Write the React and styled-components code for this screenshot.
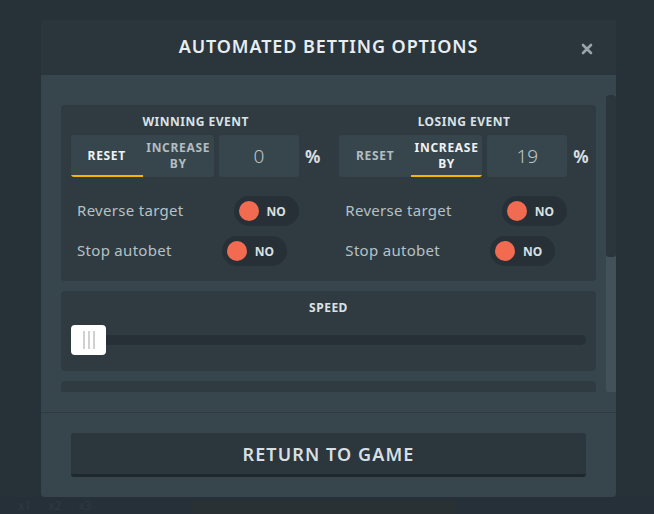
import React from 'react';
import styled, { createGlobalStyle } from 'styled-components';

const GlobalStyle = createGlobalStyle`
  html, body {
    margin: 0;
    padding: 0;
    background: #273238;
  }
  body {
    font-family: "Noto Sans", "Open Sans", sans-serif;
  }
  * {
    box-sizing: border-box;
  }
`;

const Backdrop = styled.div`
  width: 654px;
  height: 514px;
  overflow: hidden;
  padding-top: 20px;
  background: #273238;
`;

const Modal = styled.div`
  position: relative;
  width: 575px;
  margin-left: 41px;
  display: flex;
  flex-direction: column;
  background: #37454c;
  border-radius: 0 0 4px 4px;
`;

const Header = styled.header`
  height: 55px;
  display: flex;
  align-items: center;
  justify-content: center;
  background: #2a353c;
`;

const Title = styled.h1`
  margin: 0 0 4px;
  font-size: 18px;
  font-weight: 600;
  letter-spacing: 0.9px;
  color: #e8edef;
`;

const CloseButton = styled.button`
  position: absolute;
  top: 23px;
  right: 23px;
  width: 12px;
  height: 12px;
  padding: 0;
  border: 0;
  background: none;
  cursor: pointer;
  display: flex;
`;

const Body = styled.div`
  display: flex;
  height: 337px;
  padding: 20px 0;
`;

const ScrollArea = styled.div`
  flex: 1;
  overflow: hidden;
  padding: 10px 10px 10px 20px;
  display: flex;
  flex-direction: column;
  gap: 10px;
`;

const ScrollTrack = styled.div`
  width: 10px;
  background: #435158;
  border-radius: 2px 0 0 2px;
`;

const ScrollThumb = styled.div`
  height: 162px;
  background: #2b363c;
  border-radius: 3px;
`;

const Card = styled.section`
  flex-shrink: 0;
  background: #2f3b41;
  border-radius: 4px;
  padding: 9px 10px ${props => props.padBottom || 15}px;
  min-height: ${props => props.minHeight || 0}px;
`;

const EventsGrid = styled.div`
  display: grid;
  grid-template-columns: 1fr 1fr;
  column-gap: 19px;
`;

const Column = styled.div`
  display: flex;
  flex-direction: column;
`;

const Heading = styled.h2`
  margin: 0 0 ${props => props.gap || 5}px;
  font-size: 12px;
  line-height: 16px;
  font-weight: 700;
  letter-spacing: 0.5px;
  text-align: center;
  color: #dbe2e5;
`;

const Controls = styled.div`
  display: flex;
  align-items: center;
  gap: 5px;
`;

const TabGroup = styled.div`
  display: flex;
  width: 143px;
  height: 42px;
  background: #37454c;
  border-radius: 3px;
  overflow: hidden;
`;

const Tab = styled.button`
  flex: 1;
  padding: 2px 0 0;
  border: 0;
  border-bottom: 2px solid ${props => (props.active ? '#f7b500' : 'transparent')};
  background: none;
  font-family: inherit;
  font-size: 12px;
  line-height: 16px;
  font-weight: 700;
  letter-spacing: 0.7px;
  color: ${props => (props.active ? '#eef2f4' : '#b2bdc2')};
  cursor: pointer;
`;

const ValueBox = styled.input`
  width: 80px;
  height: 42px;
  border: 0;
  border-radius: 3px;
  background: #37454c;
  font-family: inherit;
  font-size: 19px;
  font-weight: 300;
  text-align: center;
  color: #bcc6ca;
  outline: none;
`;

const Percent = styled.span`
  margin-left: 1px;
  font-size: 17px;
  font-weight: 700;
  color: #d7dee1;
`;

const Options = styled.div`
  display: flex;
  flex-direction: column;
  gap: 10px;
  margin-top: 19px;
`;

const OptionRow = styled.div`
  display: flex;
  align-items: center;
  gap: 50px;
  height: 30px;
  padding-left: 6px;
`;

const OptionLabel = styled.span`
  margin-bottom: 3px;
  font-size: 15px;
  letter-spacing: 0.3px;
  color: #b6c1c6;
`;

const ToggleWrap = styled.button`
  display: flex;
  align-items: center;
  width: 65px;
  height: 30px;
  padding: 0 5px;
  border: 0;
  border-radius: 15px;
  background: #263036;
  cursor: pointer;
  font-family: inherit;
`;

const Knob = styled.span`
  width: 20px;
  height: 20px;
  border-radius: 50%;
  background: ${props => (props.on ? '#4caf7d' : '#f26a50')};
`;

const ToggleText = styled.span`
  margin-left: 8px;
  font-size: 12px;
  font-weight: 700;
  color: #d9e0e3;
`;

const SliderRow = styled.div`
  position: relative;
  height: 30px;
  display: flex;
  align-items: center;
`;

const Track = styled.div`
  width: 100%;
  height: 10px;
  border-radius: 5px;
  background: #263036;
`;

const Thumb = styled.div`
  position: absolute;
  top: 0;
  left: 0;
  width: 35px;
  height: 30px;
  border-radius: 4px;
  background: #ffffff;
  display: flex;
  align-items: center;
  justify-content: center;
  gap: 3px;
`;

const Grip = styled.span`
  width: 2px;
  height: 18px;
  background: #d0d0d0;
`;

const Footer = styled.footer`
  border-top: 1px solid #2f3b41;
  padding: 20px 30px;
`;

const ReturnButton = styled.button`
  width: 100%;
  height: 44px;
  border: 0;
  border-bottom: 3px solid #1f282d;
  border-radius: 3px;
  background: #2b363d;
  font-family: inherit;
  font-size: 18px;
  font-weight: 600;
  letter-spacing: 1.1px;
  color: #d8dfe2;
  cursor: pointer;
`;

/* dimmed game UI peeking out under the dialog */
const GameStrip = styled.div`
  display: flex;
  align-items: flex-end;
  height: 17px;
  padding-left: 18px;
  background: #253038;
`;

const Multiplier = styled.span`
  margin-right: 17px;
  font-size: 12px;
  line-height: 16px;
  color: #2e3a42;
`;

const GameBar = styled.div`
  width: 264px;
  height: 14px;
  margin-left: 82px;
  background: #2a3134;
`;

function Toggle({ on }) {
  return (
    <ToggleWrap>
      <Knob on={on} />
      <ToggleText>{on ? 'YES' : 'NO'}</ToggleText>
    </ToggleWrap>
  );
}

function EventColumn({ title, mode, value }) {
  return (
    <Column>
      <Heading>{title}</Heading>
      <Controls>
        <TabGroup>
          <Tab active={mode === 'reset'}>RESET</Tab>
          <Tab active={mode === 'increase'}>
            INCREASE
            <br />
            BY
          </Tab>
        </TabGroup>
        <ValueBox readOnly value={value} />
        <Percent>%</Percent>
      </Controls>
      <Options>
        <OptionRow>
          <OptionLabel>Reverse target</OptionLabel>
          <Toggle />
        </OptionRow>
        <OptionRow>
          <OptionLabel>Stop autobet</OptionLabel>
          <Toggle />
        </OptionRow>
      </Options>
    </Column>
  );
}

export default function App() {
  return (
    <>
      <GlobalStyle />
      <Backdrop>
        <Modal>
          <Header>
            <Title>AUTOMATED BETTING OPTIONS</Title>
          </Header>
          <CloseButton aria-label="Close">
            <svg width="12" height="12" viewBox="0 0 12 12">
              <path d="M2 2 L10 10 M10 2 L2 10" stroke="#9aa4a9" strokeWidth="2.6" strokeLinecap="round" />
            </svg>
          </CloseButton>
          <Body>
            <ScrollArea>
              <Card>
                <EventsGrid>
                  <EventColumn title="WINNING EVENT" mode="reset" value="0" />
                  <EventColumn title="LOSING EVENT" mode="increase" value="19" />
                </EventsGrid>
              </Card>
              <Card padBottom={16}>
                <Heading gap={9}>SPEED</Heading>
                <SliderRow>
                  <Track />
                  <Thumb>
                    <Grip />
                    <Grip />
                    <Grip />
                  </Thumb>
                </SliderRow>
              </Card>
              <Card minHeight={249} />
            </ScrollArea>
            <ScrollTrack>
              <ScrollThumb />
            </ScrollTrack>
          </Body>
          <Footer>
            <ReturnButton>RETURN TO GAME</ReturnButton>
          </Footer>
        </Modal>
        <GameStrip>
          <Multiplier>x1</Multiplier>
          <Multiplier>x2</Multiplier>
          <Multiplier>x3</Multiplier>
          <GameBar />
        </GameStrip>
      </Backdrop>
    </>
  );
}
